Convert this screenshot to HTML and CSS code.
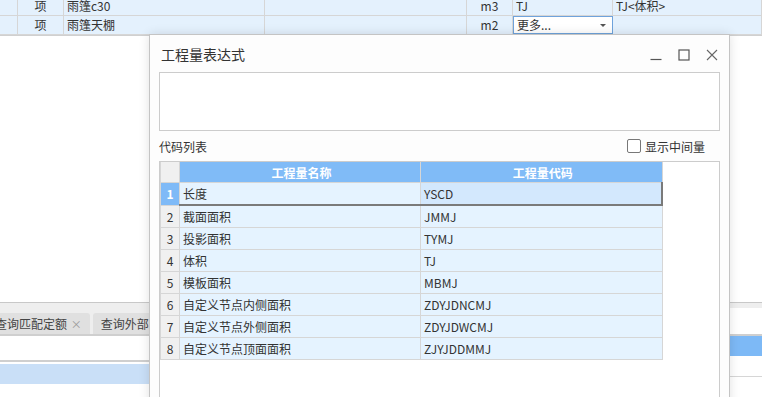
FILE: index.html
```html
<!DOCTYPE html>
<html>
<head>
    <link rel="stylesheet" href="styles.css">
</head>
<body>
    <div class="page">
        <div class="top-grid">
            <div class="trow first">
                <div class="tc"></div>
                <div class="tc center">项</div>
                <div class="tc">雨篷c30</div>
                <div class="tc"></div>
                <div class="tc center">m3</div>
                <div class="tc">TJ</div>
                <div class="tc">TJ&lt;体积&gt;</div>
            </div>
            <div class="trow">
                <div class="tc"></div>
                <div class="tc center">项</div>
                <div class="tc">雨篷天棚</div>
                <div class="tc"></div>
                <div class="tc center">m2</div>
                <div class="tc combo">更多...<span class="arrow"></span></div>
                <div class="tc"></div>
            </div>
        </div>

        <div class="spacer"></div>

        <div class="bottom">
            <div class="bottom-left">
                <div class="tabstrip">
                    <div class="tab">查询匹配定额 <span class="tab-x">×</span></div>
                    <div class="tab">查询外部清单</div>
                </div>
                <div class="pane-head"></div>
                <div class="pane-row"></div>
            </div>
            <div class="bottom-right">
                <div class="strip"></div>
                <div class="pane-head"></div>
                <div class="pane-sel"></div>
                <div class="pane-row"></div>
            </div>
        </div>
    </div>

    <div class="dialog">
        <div class="dialog-title">
            <span>工程量表达式</span>
            <div class="win-btns">
                <svg width="12" height="12" viewBox="0 0 12 12"><path d="M0.5 10.5H11.5" stroke="#555" stroke-width="1.2" fill="none"/></svg>
                <svg width="12" height="12" viewBox="0 0 12 12"><rect x="1" y="1" width="10" height="10" stroke="#555" stroke-width="1.2" fill="none"/></svg>
                <svg width="12" height="12" viewBox="0 0 12 12"><path d="M1 1L11 11M11 1L1 11" stroke="#666" stroke-width="1.1" fill="none"/></svg>
            </div>
        </div>
        <div class="expr-box"></div>
        <div class="list-bar">
            <span>代码列表</span>
            <label class="check"><span class="box"></span>显示中间量</label>
        </div>
        <div class="code-grid">
            <table>
                <tr class="head">
                    <th class="num"></th>
                    <th class="name">工程量名称</th>
                    <th class="code">工程量代码</th>
                </tr>
                <tr class="sel">
                    <td class="num">1</td><td>长度</td><td>YSCD</td>
                </tr>
                <tr><td class="num">2</td><td>截面面积</td><td>JMMJ</td></tr>
                <tr><td class="num">3</td><td>投影面积</td><td>TYMJ</td></tr>
                <tr><td class="num">4</td><td>体积</td><td>TJ</td></tr>
                <tr><td class="num">5</td><td>模板面积</td><td>MBMJ</td></tr>
                <tr><td class="num">6</td><td>自定义节点内侧面积</td><td>ZDYJDNCMJ</td></tr>
                <tr><td class="num">7</td><td>自定义节点外侧面积</td><td>ZDYJDWCMJ</td></tr>
                <tr><td class="num">8</td><td>自定义节点顶面面积</td><td>ZJYJDDMMJ</td></tr>
            </table>
        </div>
    </div>
</body>
</html>
```

FILE: styles.css
```css
body {
    margin: 0;
    font-family: "Noto Sans CJK SC", "Noto Sans", sans-serif;
    font-size: 12px;
    color: #333;
    background: #fff;
}

.page {
    width: 762px;
    height: 397px;
    overflow: hidden;
    display: flex;
    flex-direction: column;
}

/* background list */
.top-grid {
    border-bottom: 1px solid #d0d0d0;
}

.trow {
    display: grid;
    grid-template-columns: 18px 46px 201px 202px 46px 100px 1fr;
    height: 18px;
    background: #e4f1fd;
    border-bottom: 1px solid #d6d6d6;
}

.trow.first {
    height: 15px;
    align-items: end;
}

.tc {
    border-right: 1px solid #d6d6d6;
    padding-left: 3px;
    line-height: 18px;
    white-space: nowrap;
    overflow: hidden;
    height: 100%;
    box-sizing: border-box;
}

.trow.first .tc {
    line-height: 12px;
}

.tc.center {
    text-align: center;
    padding-left: 0;
}

.tc.combo {
    background: #fff;
    border: 1px solid #6fa3dc;
    position: relative;
    line-height: 16px;
}

.arrow {
    position: absolute;
    right: 6px;
    top: 7px;
    border-left: 3px solid transparent;
    border-right: 3px solid transparent;
    border-top: 3px solid #555;
}

.spacer {
    flex: 0 0 266px;
}

.bottom {
    flex: 1;
    display: flex;
    border-top: 1px solid #c8c8c8;
}

.bottom-left {
    width: 440px;
}

.bottom-right {
    flex: 1;
}

.tabstrip {
    background: #eeeeee;
    height: 31px;
    display: flex;
    align-items: flex-end;
    gap: 3px;
    margin-left: -13px;
    border-bottom: 2px solid #cfcfcf;
}

.tab {
    background: #e0e0e0;
    height: 21px;
    line-height: 21px;
    padding: 0 8px;
    border-radius: 3px 3px 0 0;
    white-space: nowrap;
    color: #444;
    font-size: 12px;
}

.tab-x {
    color: #999;
    font-size: 11px;
    margin-left: 1px;
}

.pane-head {
    height: 24px;
    border-bottom: 2px solid #cfcfcf;
}

.pane-row {
    height: 20px;
    background: #c9dff7;
    margin-top: 2px;
}

.bottom-right .strip {
    height: 5px;
    background: #eeeeee;
}

.bottom-right .pane-head {
    height: 26px;
}

.bottom-right .pane-sel {
    height: 20px;
    background: #7db9f6;
}

.bottom-right .pane-row {
    background: none;
    height: 20px;
    margin-top: 0;
    border-bottom: 1px solid #d6d6d6;
}

/* dialog */
.dialog {
    position: absolute;
    left: 149px;
    top: 34px;
    width: 581px;
    height: 380px;
    box-sizing: border-box;
    border: 1px solid #c4c4c4;
    background: #fdfdfd;
    padding: 0 9px;
    display: flex;
    flex-direction: column;
    box-shadow: 0 0 10px rgba(0, 0, 0, 0.12);
}

.dialog-title {
    height: 37px;
    flex: none;
    display: flex;
    align-items: center;
    justify-content: space-between;
    font-size: 14px;
    color: #333;
    padding-left: 2px;
}

.win-btns {
    display: flex;
    gap: 16px;
    padding-right: 2px;
    padding-top: 2px;
}

.expr-box {
    height: 59px;
    flex: none;
    box-sizing: border-box;
    border: 1px solid #cccccc;
    background: #fff;
}

.list-bar {
    height: 30px;
    flex: none;
    display: flex;
    align-items: center;
    justify-content: space-between;
    font-size: 12px;
}

.check {
    display: flex;
    align-items: center;
    gap: 4px;
    padding-right: 15px;
}

.box {
    width: 12px;
    height: 12px;
    border: 1px solid #777;
    border-radius: 2px;
    background: #fff;
}

.code-grid {
    flex: 1;
    border: 1px solid #cccccc;
    background: #fff;
}

.code-grid table {
    border-collapse: collapse;
    table-layout: fixed;
    width: 503px;
}

.code-grid th,
.code-grid td {
    border: 1px solid #d6d6d6;
    height: 21px;
    padding: 0 0 0 3px;
    white-space: nowrap;
    text-align: left;
    font-weight: normal;
    background: #e5f3ff;
    color: #333;
}

.code-grid th.num,
.code-grid td.num {
    width: 18px;
    background: #f0f0f0;
    text-align: center;
    padding: 0;
}

.code-grid th.name {
    width: 237px;
}

.code-grid tr.head th {
    background: #80bbf7;
    color: #fff;
    font-weight: bold;
    text-align: center;
    height: 20px;
    border-top: none;
}

.code-grid tr.head th.num {
    background: #f0f0f0;
}

.code-grid tr.sel td {
    border-bottom: 2px solid #7a7a7a;
}

.code-grid tr.sel td:last-child {
    background: #d3e8fd;
    border-right: 2px solid #7a7a7a;
}

.code-grid tr.sel td.num {
    background: #7fbaf7;
    color: #fff;
    font-weight: bold;
    border-bottom: 1px solid #d6d6d6;
}
```
